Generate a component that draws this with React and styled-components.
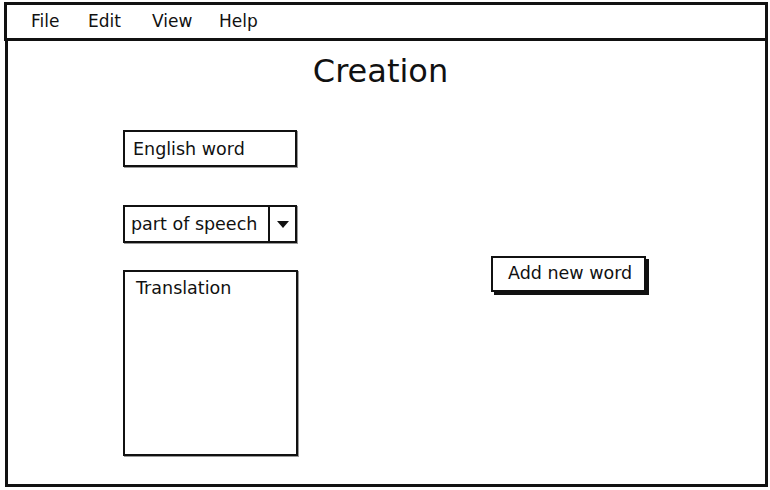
import styled, { createGlobalStyle } from "styled-components"

const Global = createGlobalStyle`
  html, body {
    margin: 0;
    background: #fff;
  }
  body {
    font-family: "DejaVu Sans", Lato, sans-serif;
    color: #111;
  }
`

const Screen = styled.div`
  width: 770px;
  height: 490px;
  box-sizing: border-box;
  padding: 2px 2px 3px 4px;
  display: flex;
  flex-direction: column;
`

const MenuBar = styled.div`
  height: 39px;
  box-sizing: border-box;
  border: 3px solid #111;
  display: flex;
  align-items: center;
  padding-left: 24px;
  font-size: 17px;
`

const MenuItem = styled.span`
  width: ${p => p.w}px;
  line-height: 1;
`

const Window = styled.div`
  flex: 1;
  margin-left: 1px;
  border: 3px solid #111;
  border-top: none;
  display: flex;
  flex-direction: column;
`

const Title = styled.h1`
  margin: 10px 12px 0 0;
  font-weight: 400;
  font-size: 32px;
  line-height: 40px;
  text-align: center;
`

const Form = styled.div`
  display: flex;
  padding: 39px 0 0 115px;
`

const Column = styled.div`
  display: flex;
  flex-direction: column;
`

const Field = styled.div`
  box-sizing: border-box;
  width: ${p => p.w || 174}px;
  height: ${p => p.h}px;
  margin-top: ${p => p.mt || 0}px;
  border: 2.5px solid #111;
  box-shadow: 1px 1px 0 #999;
  background: #fff;
  font-size: 17.5px;
  display: flex;
  align-items: ${p => (p.top ? "flex-start" : "center")};
  padding: ${p => (p.top ? "6px 0 0 11px" : "0 0 0 8px")};
  white-space: nowrap;
`

const Select = styled(Field)`
  padding: 0;
  & > span {
    flex: 1;
    padding-left: 6px;
  }
`

const Arrow = styled.div`
  width: 25px;
  align-self: stretch;
  border-left: 2px solid #111;
  display: flex;
  align-items: center;
  justify-content: center;
`

const Button = styled.button`
  margin: 126px 0 0 193px;
  height: 36px;
  padding: 0 12px 2px 15px;
  align-self: flex-start;
  background: #fff;
  border: 2px solid #111;
  box-shadow: 3px 3px 0 #111;
  font: inherit;
  font-size: 17.5px;
  color: #111;
`

export default function App() {
  return (
    <>
      <Global />
      <Screen>
        <MenuBar>
          <MenuItem w={57}>File</MenuItem>
          <MenuItem w={64}>Edit</MenuItem>
          <MenuItem w={67}>View</MenuItem>
          <MenuItem w={50}>Help</MenuItem>
        </MenuBar>
        <Window>
          <Title>Creation</Title>
          <Form>
            <Column>
              <Field h={37}>English word</Field>
              <Select h={38} mt={38}>
                <span>part of speech</span>
                <Arrow>
                  <svg width="12" height="7" viewBox="0 0 12 7">
                    <path d="M0 0h12L6 7z" fill="#111" />
                  </svg>
                </Arrow>
              </Select>
              <Field h={186} w={175} mt={27} top>Translation</Field>
            </Column>
            <Button>Add new word</Button>
          </Form>
        </Window>
      </Screen>
    </>
  )
}
